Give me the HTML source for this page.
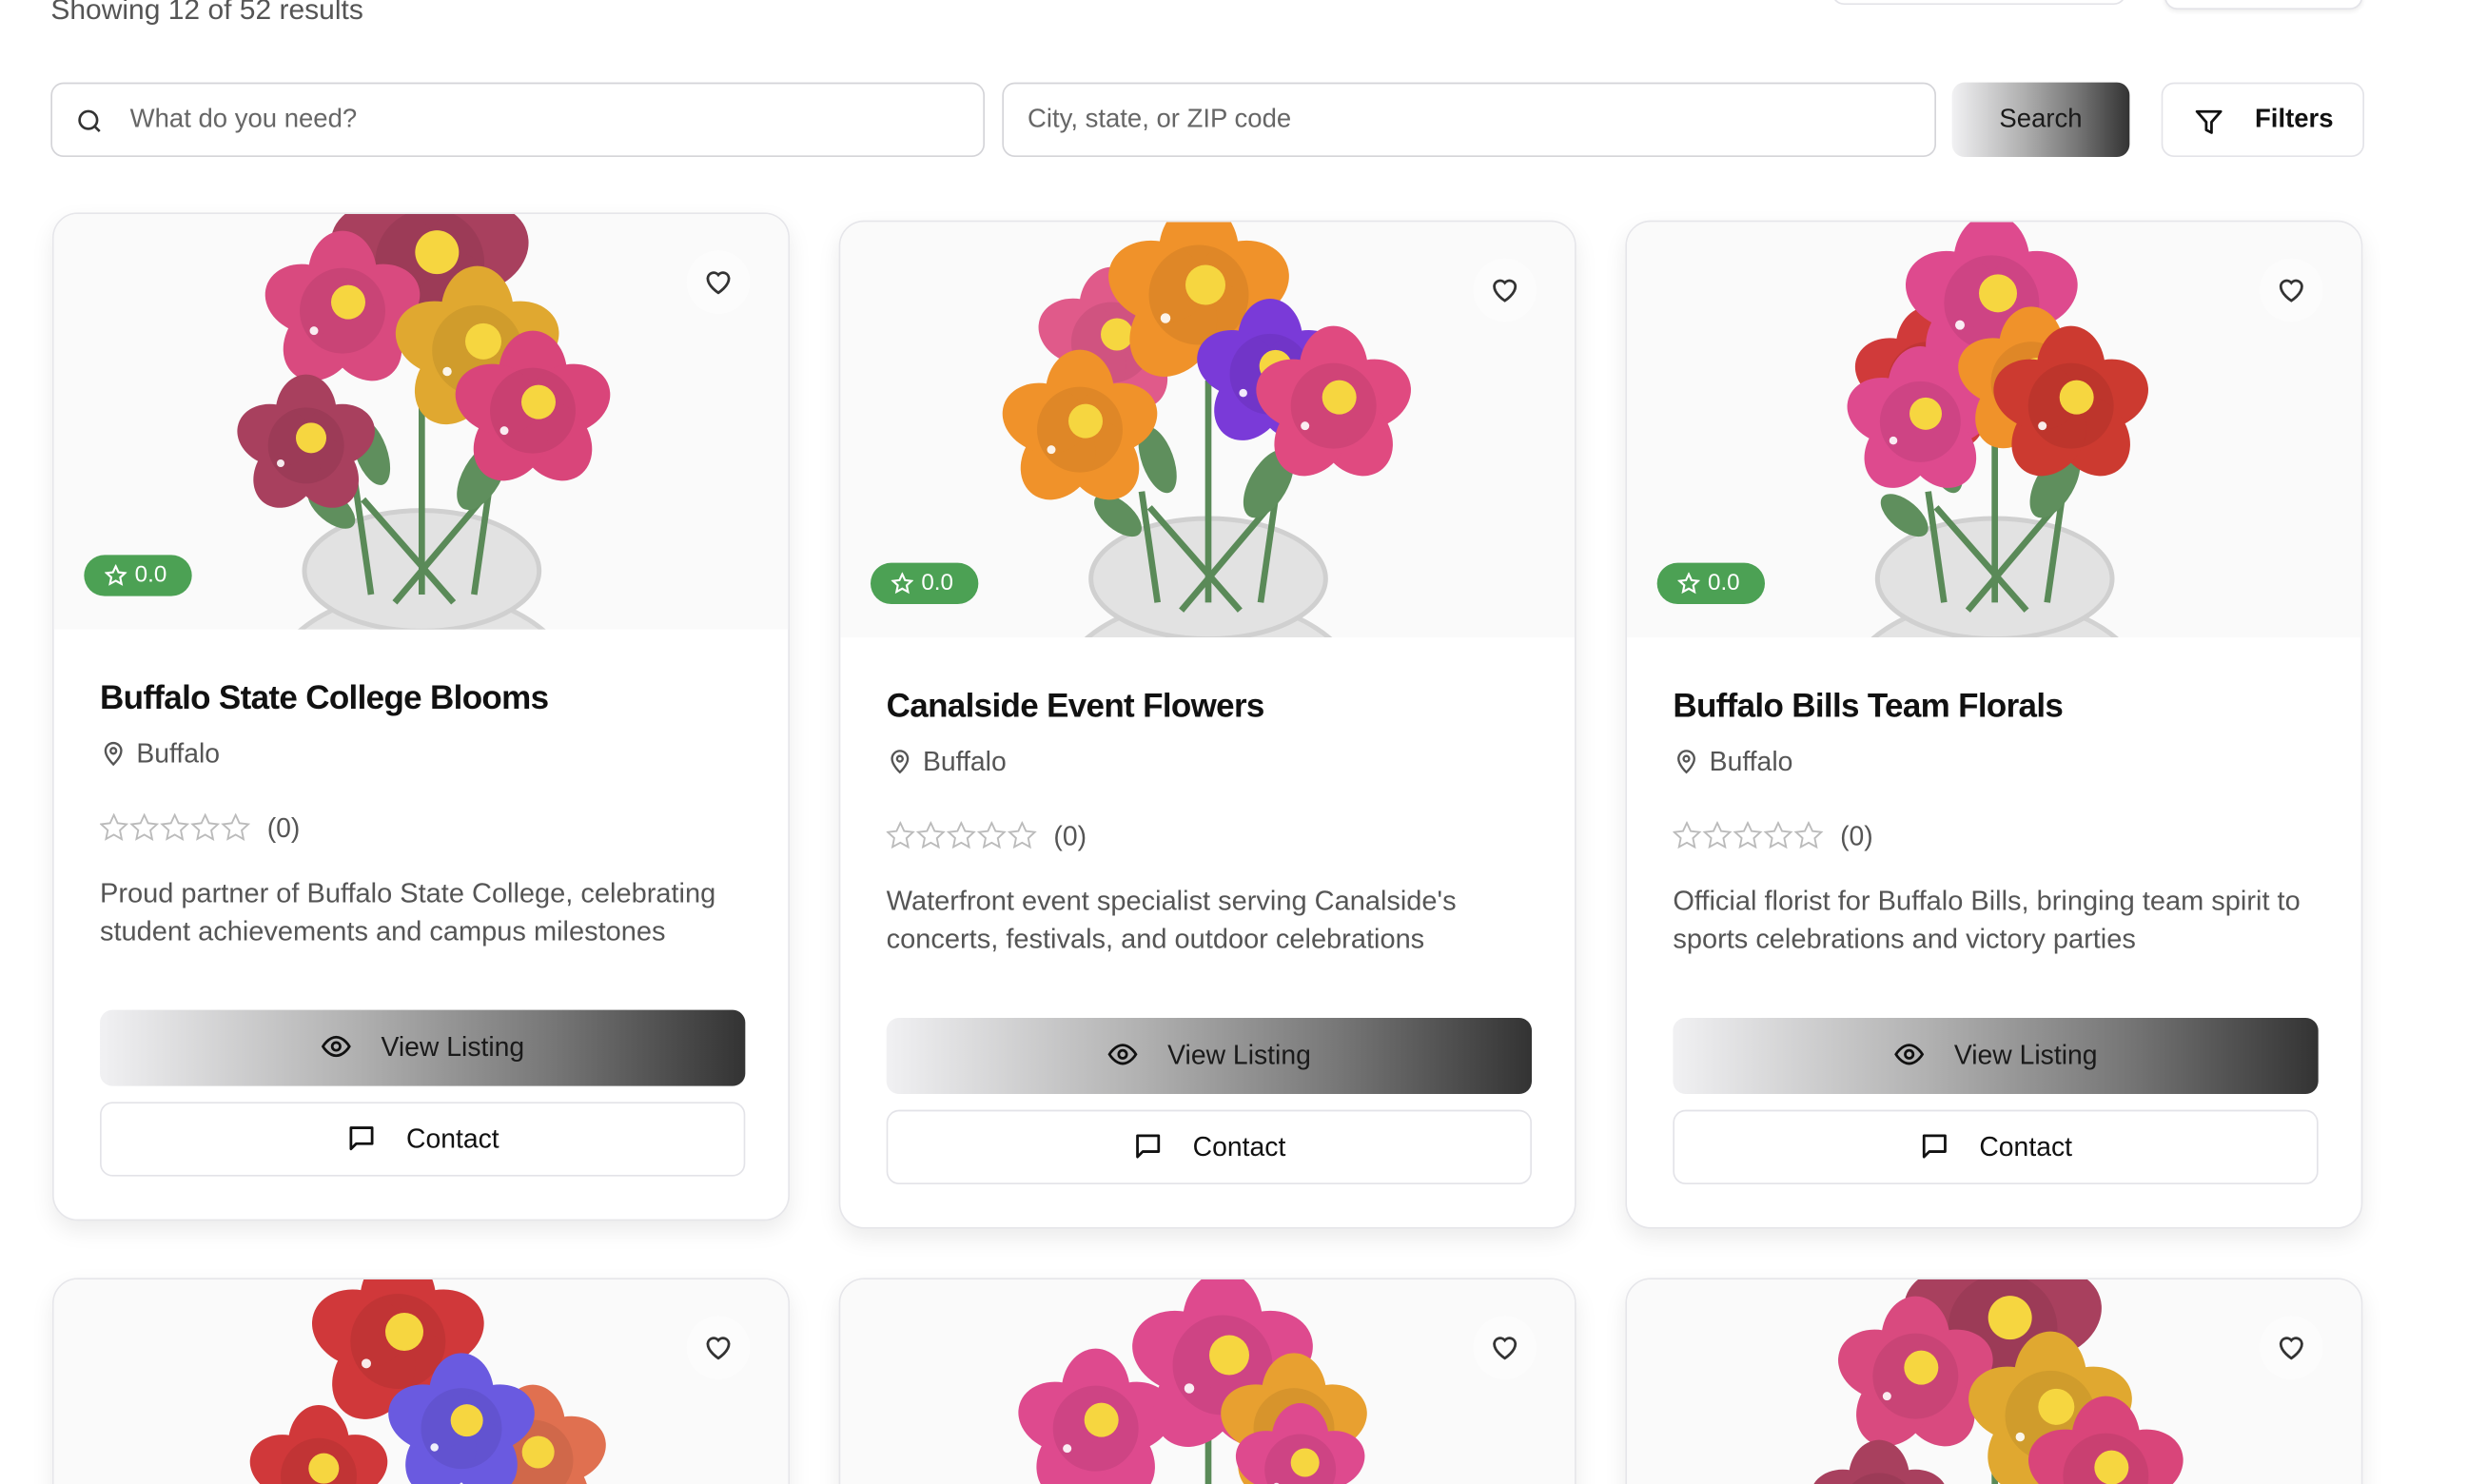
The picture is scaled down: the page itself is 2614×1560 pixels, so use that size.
<!DOCTYPE html>
<html><head><meta charset="utf-8">
<style>
*{box-sizing:border-box;margin:0;padding:0}
html,body{width:2614px;height:1560px;overflow:hidden;background:#fff;font-family:"Liberation Sans",sans-serif}
#clip{position:relative;width:2614px;height:1560px;overflow:hidden}
#w{position:absolute;left:0;top:0;width:1568px;height:936px;overflow:hidden;transform:scale(1.66667);transform-origin:0 0}
.abs{position:absolute}
.inp{position:absolute;top:52px;height:47px;border:1px solid #d4d4d8;border-radius:8px;font-size:16.5px;color:#666;line-height:45px}
.grad{background:linear-gradient(90deg,#f1f1f3 0%,#b0b0b0 40%,#777 70%,#333 100%)}
.card{position:absolute;width:465px;height:636px;background:#fff;border:1px solid #e6e6ea;border-radius:16px;box-shadow:0 6px 14px rgba(0,0,0,.08);overflow:hidden}
.img{position:absolute;left:0;top:0;width:465px;height:262px;background:#fafafa}
.heart{position:absolute;right:24px;top:23px;width:40px;height:40px;border-radius:20px;background:#fcfcfc}
.badge{position:absolute;left:19px;top:215px;width:68px;height:26px;border-radius:13px;background:#4ca154;color:#fff;font-size:14.5px;line-height:26px;padding-left:32px}
.badge svg{position:absolute;left:13px;top:6px}
.t{position:absolute;left:29px;top:294px;font-size:21px;font-weight:bold;color:#111;letter-spacing:-.4px}
.loc{position:absolute;left:29px;top:331px;font-size:17px;color:#555}
.loc svg{vertical-align:-3px;margin-right:6px}
.st{position:absolute;left:29px;top:378px;font-size:17px;color:#555}
.st svg{vertical-align:-3px}
.d{position:absolute;left:29px;top:416px;width:412px;font-size:17.4px;line-height:24px;color:#555}
.vb{position:absolute;left:29px;top:502px;width:407px;height:48px;border-radius:8px;font-size:17px;color:#1a1a1a;text-align:center;line-height:48px}
.cb{position:absolute;left:29px;top:560px;width:407px;height:47px;border-radius:8px;border:1px solid #e3e3e8;font-size:17px;color:#111;text-align:center;line-height:45px}
.vb svg,.cb svg{vertical-align:-4px;margin-right:18px}
</style></head><body><div id="clip"><div id="w">
<svg width="0" height="0" style="position:absolute"><defs>
<g id="fl"><ellipse cx="0" cy="-26" rx="24" ry="30" fill="currentColor"/><ellipse cx="0" cy="-26" rx="24" ry="30" fill="currentColor" transform="rotate(72)"/><ellipse cx="0" cy="-26" rx="24" ry="30" fill="currentColor" transform="rotate(144)"/><ellipse cx="0" cy="-26" rx="24" ry="30" fill="currentColor" transform="rotate(216)"/><ellipse cx="0" cy="-26" rx="24" ry="30" fill="currentColor" transform="rotate(288)"/><circle r="30" fill="#000" opacity=".07"/><circle cx="4" cy="-6" r="12" fill="#f6d640"/><circle cx="-20" cy="14" r="3" fill="#fff" opacity=".9"/></g>
<g id="vase"><ellipse cx="232" cy="300" rx="96" ry="62" fill="#e4e4e4" stroke="#d2d2d2" stroke-width="3"/><ellipse cx="232" cy="225" rx="74" ry="38" fill="#e2e2e2" stroke="#d0d0d0" stroke-width="3"/><g stroke="#5a8a58" stroke-width="4"><line x1="232" y1="100" x2="232" y2="240"/><line x1="190" y1="170" x2="200" y2="240"/><line x1="275" y1="170" x2="265" y2="240"/><line x1="195" y1="180" x2="252" y2="245"/><line x1="270" y1="180" x2="215" y2="245"/></g><ellipse cx="270" cy="165" rx="12" ry="24" fill="#5f8f5d" transform="rotate(30 270 165)"/><ellipse cx="200" cy="150" rx="10" ry="22" fill="#5f8f5d" transform="rotate(-20 200 150)"/><ellipse cx="175" cy="185" rx="9" ry="18" fill="#5f8f5d" transform="rotate(-50 175 185)"/></g>
<g id="s5"><path d="M11 1l3 6.5 7 .8-5.2 4.8 1.4 7L11 16.6 4.8 20l1.4-7L1 8.3l7-.8z"/><path transform="translate(24 0)" d="M11 1l3 6.5 7 .8-5.2 4.8 1.4 7L11 16.6 4.8 20l1.4-7L1 8.3l7-.8z"/><path transform="translate(48 0)" d="M11 1l3 6.5 7 .8-5.2 4.8 1.4 7L11 16.6 4.8 20l1.4-7L1 8.3l7-.8z"/><path transform="translate(72 0)" d="M11 1l3 6.5 7 .8-5.2 4.8 1.4 7L11 16.6 4.8 20l1.4-7L1 8.3l7-.8z"/><path transform="translate(96 0)" d="M11 1l3 6.5 7 .8-5.2 4.8 1.4 7L11 16.6 4.8 20l1.4-7L1 8.3l7-.8z"/></g>
</defs></svg>

<div class="abs" style="left:32px;top:-4px;font-size:18px;color:#555">Showing 12 of 52 results</div>
<div class="abs" style="left:1155px;top:-20px;width:186px;height:23px;border:1px solid #e3e3e8;border-radius:8px"></div>
<div class="abs" style="left:1365px;top:-20px;width:125px;height:26px;border:1px solid #e3e3e8;border-radius:8px;box-shadow:0 1px 3px rgba(0,0,0,.08)"></div>

<div class="inp" style="left:32px;width:589px;padding-left:49px"><svg class="abs" style="left:14px;top:14px" width="19" height="19" viewBox="0 0 24 24" fill="none" stroke="#333" stroke-width="2"><circle cx="11" cy="11" r="7"/><path d="M20 20l-4-4"/></svg>What do you need?</div>
<div class="inp" style="left:632px;width:589px;padding-left:15px">City, state, or ZIP code</div>
<div class="abs grad" style="left:1231px;top:52px;width:112px;height:47px;border-radius:8px;text-align:center;line-height:47px;font-size:16.5px;color:#1a1a1a">Search</div>
<div class="abs" style="left:1363px;top:52px;width:128px;height:47px;border:1px solid #e3e3e8;border-radius:8px;font-size:16.5px;color:#111;line-height:45px;padding-left:58px;font-weight:bold"><svg class="abs" style="left:19px;top:14px" width="20" height="20" viewBox="0 0 24 24" fill="none" stroke="#111" stroke-width="2" stroke-linejoin="round"><path d="M3 4h18l-7 8v8l-4-2v-6z"/></svg>Filters</div>

<div class="card" style="left:33px;top:134px">
<div class="img"><svg width="465" height="262"><use href="#vase"/><use href="#fl" style="color:#a8405e" transform="translate(237,31) scale(1.15)"/><use href="#fl" style="color:#d94a7f" transform="translate(182,61) scale(.9)"/><use href="#fl" style="color:#e0a830" transform="translate(267,86) scale(.95)"/><use href="#fl" style="color:#d9457a" transform="translate(302,124) scale(.9)"/><use href="#fl" style="color:#a8405e" transform="translate(159,146) scale(.8)"/></svg></div>
<div class="heart"><svg style="margin:10px" width="20" height="20" viewBox="0 0 24 24" fill="none" stroke="#333" stroke-width="2"><path d="M12 20s-8-5-8-11a4.5 4.5 0 018-2.5A4.5 4.5 0 0120 9c0 6-8 11-8 11z"/></svg></div>
<div class="badge"><svg width="14" height="14" viewBox="0 0 24 24" fill="none" stroke="#fff" stroke-width="2.2"><path d="M12 2l3 6.5 7 .8-5.2 4.8 1.4 7L12 17.6 5.8 21l1.4-7L2 9.3l7-.8z"/></svg>0.0</div>
<div class="t">Buffalo State College Blooms</div>
<div class="loc"><svg width="17" height="18" viewBox="0 0 24 24" fill="none" stroke="#555" stroke-width="2"><path d="M12 22s7-6.5 7-12a7 7 0 00-14 0c0 5.5 7 12 7 12z"/><circle cx="12" cy="10" r="2.5"/></svg>Buffalo</div>
<div class="st"><svg width="96" height="18" viewBox="0 0 120 22" fill="none" stroke="#bbb" stroke-width="1.4"><use href="#s5"/></svg>&nbsp;&nbsp;(0)</div>
<div class="d">Proud partner of Buffalo State College, celebrating student achievements and campus milestones</div>
<div class="vb grad"><svg width="20" height="20" viewBox="0 0 24 24" fill="none" stroke="#111" stroke-width="2"><path d="M2 12s4-7 10-7 10 7 10 7-4 7-10 7S2 12 2 12z"/><circle cx="12" cy="12" r="3"/></svg>View Listing</div>
<div class="cb"><svg width="20" height="20" viewBox="0 0 24 24" fill="none" stroke="#111" stroke-width="2" stroke-linejoin="round"><path d="M4 4h16v12H8l-4 4z"/></svg>Contact</div>
</div>

<div class="card" style="left:529px;top:139px">
<div class="img"><svg width="465" height="262"><use href="#vase"/><use href="#fl" style="color:#e05a8a" transform="translate(171,76) scale(.85)"/><use href="#fl" style="color:#f0922a" transform="translate(226,46) scale(1.05)"/><use href="#fl" style="color:#7a3ad8" transform="translate(271,96) scale(.85)"/><use href="#fl" style="color:#e04a80" transform="translate(311,116) scale(.9)"/><use href="#fl" style="color:#f0922a" transform="translate(151,131) scale(.9)"/></svg></div>
<div class="heart"><svg style="margin:10px" width="20" height="20" viewBox="0 0 24 24" fill="none" stroke="#333" stroke-width="2"><path d="M12 20s-8-5-8-11a4.5 4.5 0 018-2.5A4.5 4.5 0 0120 9c0 6-8 11-8 11z"/></svg></div>
<div class="badge"><svg width="14" height="14" viewBox="0 0 24 24" fill="none" stroke="#fff" stroke-width="2.2"><path d="M12 2l3 6.5 7 .8-5.2 4.8 1.4 7L12 17.6 5.8 21l1.4-7L2 9.3l7-.8z"/></svg>0.0</div>
<div class="t">Canalside Event Flowers</div>
<div class="loc"><svg width="17" height="18" viewBox="0 0 24 24" fill="none" stroke="#555" stroke-width="2"><path d="M12 22s7-6.5 7-12a7 7 0 00-14 0c0 5.5 7 12 7 12z"/><circle cx="12" cy="10" r="2.5"/></svg>Buffalo</div>
<div class="st"><svg width="96" height="18" viewBox="0 0 120 22" fill="none" stroke="#bbb" stroke-width="1.4"><use href="#s5"/></svg>&nbsp;&nbsp;(0)</div>
<div class="d">Waterfront event specialist serving Canalside's<br>concerts, festivals, and outdoor celebrations</div>
<div class="vb grad"><svg width="20" height="20" viewBox="0 0 24 24" fill="none" stroke="#111" stroke-width="2"><path d="M2 12s4-7 10-7 10 7 10 7-4 7-10 7S2 12 2 12z"/><circle cx="12" cy="12" r="3"/></svg>View Listing</div>
<div class="cb"><svg width="20" height="20" viewBox="0 0 24 24" fill="none" stroke="#111" stroke-width="2" stroke-linejoin="round"><path d="M4 4h16v12H8l-4 4z"/></svg>Contact</div>
</div>

<div class="card" style="left:1025px;top:139px">
<div class="img"><svg width="465" height="262"><use href="#vase"/><use href="#fl" style="color:#d03a3a" transform="translate(190,101) scale(.85)"/><use href="#fl" style="color:#de4a8e" transform="translate(230,51) scale(1.0)"/><use href="#fl" style="color:#de4a8e" transform="translate(185,126) scale(.85)"/><use href="#fl" style="color:#f0922a" transform="translate(255,101) scale(.85)"/><use href="#fl" style="color:#cc3a30" transform="translate(280,116) scale(.9)"/></svg></div>
<div class="heart"><svg style="margin:10px" width="20" height="20" viewBox="0 0 24 24" fill="none" stroke="#333" stroke-width="2"><path d="M12 20s-8-5-8-11a4.5 4.5 0 018-2.5A4.5 4.5 0 0120 9c0 6-8 11-8 11z"/></svg></div>
<div class="badge"><svg width="14" height="14" viewBox="0 0 24 24" fill="none" stroke="#fff" stroke-width="2.2"><path d="M12 2l3 6.5 7 .8-5.2 4.8 1.4 7L12 17.6 5.8 21l1.4-7L2 9.3l7-.8z"/></svg>0.0</div>
<div class="t">Buffalo Bills Team Florals</div>
<div class="loc"><svg width="17" height="18" viewBox="0 0 24 24" fill="none" stroke="#555" stroke-width="2"><path d="M12 22s7-6.5 7-12a7 7 0 00-14 0c0 5.5 7 12 7 12z"/><circle cx="12" cy="10" r="2.5"/></svg>Buffalo</div>
<div class="st"><svg width="96" height="18" viewBox="0 0 120 22" fill="none" stroke="#bbb" stroke-width="1.4"><use href="#s5"/></svg>&nbsp;&nbsp;(0)</div>
<div class="d">Official florist for Buffalo Bills, bringing team spirit to<br>sports celebrations and victory parties</div>
<div class="vb grad"><svg width="20" height="20" viewBox="0 0 24 24" fill="none" stroke="#111" stroke-width="2"><path d="M2 12s4-7 10-7 10 7 10 7-4 7-10 7S2 12 2 12z"/><circle cx="12" cy="12" r="3"/></svg>View Listing</div>
<div class="cb"><svg width="20" height="20" viewBox="0 0 24 24" fill="none" stroke="#111" stroke-width="2" stroke-linejoin="round"><path d="M4 4h16v12H8l-4 4z"/></svg>Contact</div>
</div>

<div class="card" style="left:33px;top:806px;height:160px">
<div class="img"><svg width="465" height="262"><use href="#vase"/><use href="#fl" style="color:#d0383a" transform="translate(217,39) scale(1.0)"/><use href="#fl" style="color:#e07050" transform="translate(302,114) scale(.85)"/><use href="#fl" style="color:#6a5ae0" transform="translate(257,94) scale(.85)"/><use href="#fl" style="color:#d0383a" transform="translate(167,124) scale(.8)"/></svg></div>
<div class="heart"><svg style="margin:10px" width="20" height="20" viewBox="0 0 24 24" fill="none" stroke="#333" stroke-width="2"><path d="M12 20s-8-5-8-11a4.5 4.5 0 018-2.5A4.5 4.5 0 0120 9c0 6-8 11-8 11z"/></svg></div>
</div>
<div class="card" style="left:529px;top:806px;height:160px">
<div class="img"><svg width="465" height="262"><use href="#vase"/><use href="#fl" style="color:#de4a8e" transform="translate(161,94) scale(.9)"/><use href="#fl" style="color:#de4a8e" transform="translate(241,54) scale(1.05)"/><use href="#fl" style="color:#e8a030" transform="translate(286,94) scale(.85)"/><use href="#fl" style="color:#de4a8e" transform="translate(290,120) scale(.75)"/></svg></div>
<div class="heart"><svg style="margin:10px" width="20" height="20" viewBox="0 0 24 24" fill="none" stroke="#333" stroke-width="2"><path d="M12 20s-8-5-8-11a4.5 4.5 0 018-2.5A4.5 4.5 0 0120 9c0 6-8 11-8 11z"/></svg></div>
</div>
<div class="card" style="left:1025px;top:806px;height:160px">
<div class="img"><svg width="465" height="262"><use href="#vase"/><use href="#fl" style="color:#a8405e" transform="translate(237,31) scale(1.15)"/><use href="#fl" style="color:#d94a7f" transform="translate(182,61) scale(.9)"/><use href="#fl" style="color:#e0a830" transform="translate(267,86) scale(.95)"/><use href="#fl" style="color:#d9457a" transform="translate(302,124) scale(.9)"/><use href="#fl" style="color:#a8405e" transform="translate(159,146) scale(.8)"/></svg></div>
<div class="heart"><svg style="margin:10px" width="20" height="20" viewBox="0 0 24 24" fill="none" stroke="#333" stroke-width="2"><path d="M12 20s-8-5-8-11a4.5 4.5 0 018-2.5A4.5 4.5 0 0120 9c0 6-8 11-8 11z"/></svg></div>
</div>
</div></div></body></html>
